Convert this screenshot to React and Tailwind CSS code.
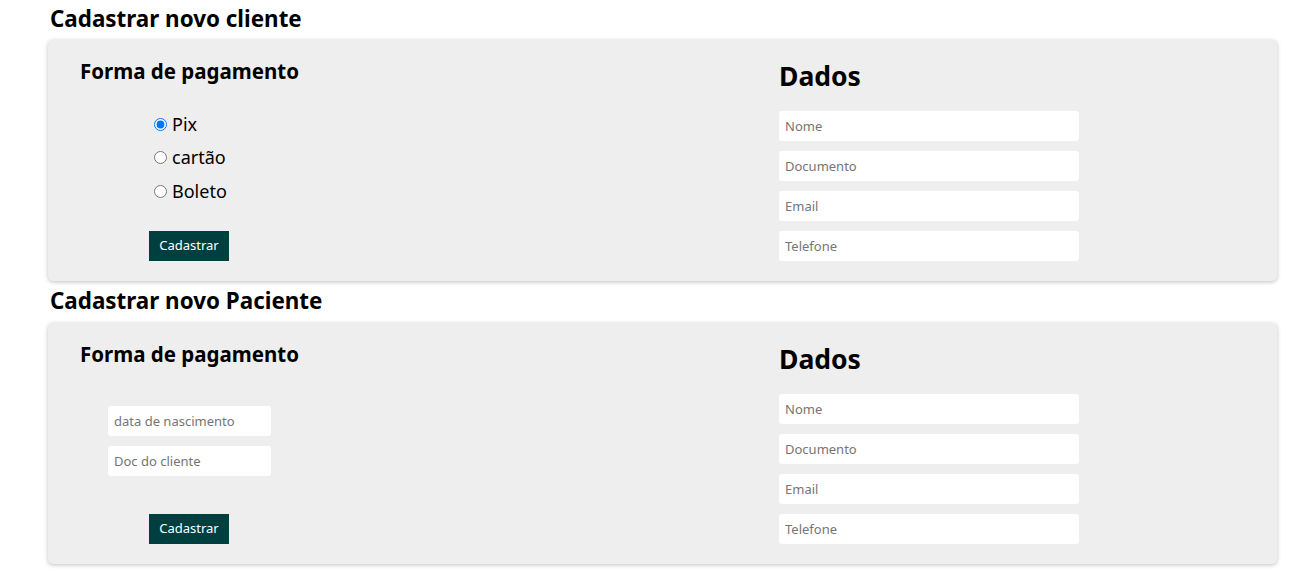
function Field({ placeholder, className = "w-[300px]" }) {
  return (
    <input
      type="text"
      placeholder={placeholder}
      className={`${className} h-[30px] rounded-[3px] bg-white px-[6px] text-[13px] text-black placeholder:text-[#757575] outline-none`}
    />
  );
}

function Dados() {
  return (
    <div className="flex flex-col">
      <h2 className="text-[26.5px] font-bold leading-[40px]">Dados</h2>
      <div className="mt-[15px] flex flex-col gap-[10px]">
        <Field placeholder="Nome" />
        <Field placeholder="Documento" />
        <Field placeholder="Email" />
        <Field placeholder="Telefone" />
      </div>
    </div>
  );
}

function Button() {
  return (
    <button className="w-[80px] h-[30px] bg-[#003f3f] text-white text-[13px]">
      Cadastrar
    </button>
  );
}

function Card({ children }) {
  return (
    <div className="ml-12 mr-[18px] flex rounded-[5px] bg-[#eeeeee] pt-4 pb-5 shadow-[0_1px_4px_rgba(0,0,0,0.25)]">
      <div className="w-[731px] pl-8">
        <h3 className="text-[20.5px] font-bold leading-[28px] pt-px -mb-px">Forma de pagamento</h3>
        {children}
      </div>
      <Dados />
    </div>
  );
}

export default function App() {
  const options = ["Pix", "cartão", "Boleto"];
  return (
    <div
      className="w-full min-h-screen bg-white text-black pt-[4px]"
      style={{ fontFamily: '"Noto Sans", "Open Sans", sans-serif' }}
    >
      <h2 className="ml-[50px] mb-[6px] text-[22.4px] font-bold leading-[30px]">
        Cadastrar novo cliente
      </h2>
      <Card>
        <div className="mt-[23.5px] ml-[69px] flex flex-col">
          {options.map((o, i) => (
            <label key={o} className="h-[33.5px] flex items-center text-[18px]">
              <input
                type="radio"
                name="pagamento"
                defaultChecked={i === 0}
                className="ml-[5px] mr-[5px] w-[13px] h-[13px]"
              />
              {o}
            </label>
          ))}
        </div>
        <div className="mt-[23px] ml-[69px]">
          <Button />
        </div>
      </Card>

      <h2 className="ml-[50px] mt-[5px] mb-[7px] text-[22.4px] font-bold leading-[30px]">
        Cadastrar novo Paciente
      </h2>
      <Card>
        <div className="mt-[39px] ml-7 flex flex-col gap-[10px]">
          <Field placeholder="data de nascimento" className="w-[163px]" />
          <Field placeholder="Doc do cliente" className="w-[163px]" />
        </div>
        <div className="mt-[38px] ml-[69px]">
          <Button />
        </div>
      </Card>
    </div>
  );
}
